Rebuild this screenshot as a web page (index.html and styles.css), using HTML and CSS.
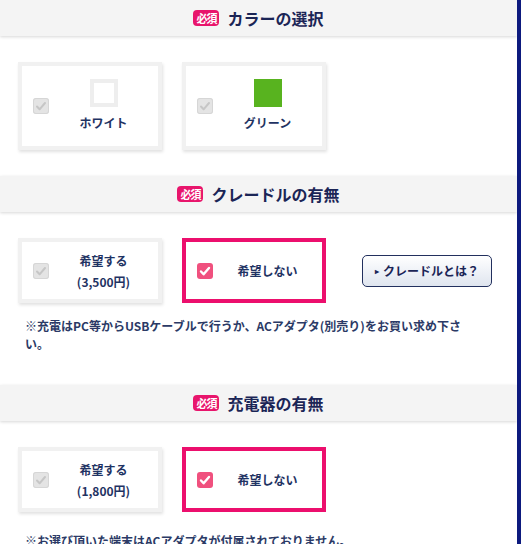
FILE: index.html
```html
<!DOCTYPE html>
<html lang="ja">
<head>
    <meta charset="UTF-8">
    <meta name="viewport" content="width=device-width, initial-scale=1.0">
    <title>オプションの選択</title>
    <link rel="stylesheet" href="styles.css">
</head>
<body>
<div class="page">

    <!-- カラー -->
    <div class="section-head"><span class="badge">必須</span>カラーの選択</div>
    <div class="section-body">
        <div class="choice-row">
            <label class="choice tall">
                <span class="check off"><svg viewBox="0 0 16 16"><path d="M4 8.5l2.6 2.8L12 5" /></svg></span>
                <span class="choice-label">
                    <span class="swatch white"></span>
                    ホワイト
                </span>
            </label>
            <label class="choice tall">
                <span class="check off"><svg viewBox="0 0 16 16"><path d="M4 8.5l2.6 2.8L12 5" /></svg></span>
                <span class="choice-label">
                    <span class="swatch green"></span>
                    グリーン
                </span>
            </label>
        </div>
    </div>

    <!-- クレードル -->
    <div class="section-head"><span class="badge">必須</span>クレードルの有無</div>
    <div class="section-body">
        <div class="choice-row">
            <label class="choice">
                <span class="check off"><svg viewBox="0 0 16 16"><path d="M4 8.5l2.6 2.8L12 5" /></svg></span>
                <span class="choice-label">希望する<br>(3,500円)</span>
            </label>
            <label class="choice selected">
                <span class="check on"><svg viewBox="0 0 16 16"><path d="M4 8.5l2.6 2.8L12 5" /></svg></span>
                <span class="choice-label">希望しない</span>
            </label>
            <a class="info-btn" href="#"><span class="arrow">&#9656;</span>クレードルとは？</a>
        </div>
        <p class="note">※充電はPC等からUSBケーブルで行うか、ACアダプタ(別売り)をお買い求め下さい。</p>
    </div>

    <!-- 充電器 -->
    <div class="section-head"><span class="badge">必須</span>充電器の有無</div>
    <div class="section-body">
        <div class="choice-row">
            <label class="choice">
                <span class="check off"><svg viewBox="0 0 16 16"><path d="M4 8.5l2.6 2.8L12 5" /></svg></span>
                <span class="choice-label">希望する<br>(1,800円)</span>
            </label>
            <label class="choice selected">
                <span class="check on"><svg viewBox="0 0 16 16"><path d="M4 8.5l2.6 2.8L12 5" /></svg></span>
                <span class="choice-label">希望しない</span>
            </label>
        </div>
        <p class="note wide">※お選び頂いた端末はACアダプタが付属されておりません。</p>
    </div>

</div>
</body>
</html>
```

FILE: styles.css
```css
html, body {
    margin: 0;
    padding: 0;
}
body {
    font-family: "Noto Sans CJK JP", "Liberation Sans", sans-serif;
    background: #fff;
    color: #1f3363;
}
.page {
    width: 517px;
    min-height: 544px;
    border-right: 4px solid #0d1a7e;
    background: #fff;
    overflow: hidden;
}
.section-head {
    height: 36px;
    display: flex;
    align-items: center;
    justify-content: center;
    background: #f4f4f4;
    box-shadow: 0 1px 3px rgba(0, 0, 0, 0.16);
    font-size: 16px;
    font-weight: bold;
    color: #1b2556;
    position: relative;
}
.badge {
    display: inline-block;
    width: 26px;
    height: 16px;
    line-height: 16px;
    margin-right: 8px;
    border-radius: 4px;
    background: #e8156c;
    color: #fff;
    font-size: 11px;
    text-align: center;
    letter-spacing: -1px;
}
.section-body {
    padding: 26px 0 26px 18px;
}
.choice-row {
    display: flex;
    align-items: center;
    gap: 20px;
}
.choice {
    box-sizing: border-box;
    width: 144px;
    height: 65px;
    display: flex;
    align-items: center;
    padding-left: 11px;
    background: #fff;
    border: 4px solid #f1f1f1;
    box-shadow: 1px 2px 3px rgba(0, 0, 0, 0.12);
    cursor: pointer;
}
.choice.tall {
    height: 88px;
}
.choice.selected {
    border-color: #ec0f6d;
    box-shadow: none;
}
.check {
    width: 16px;
    height: 16px;
    border-radius: 3px;
    flex-shrink: 0;
    display: flex;
}
.check svg {
    width: 16px;
    height: 16px;
    fill: none;
    stroke-width: 2;
    stroke-linecap: round;
    stroke-linejoin: round;
}
.check.off {
    background: #e4e4e4;
    box-shadow: inset 0 0 0 1px #d6d6d6;
}
.check.off svg {
    stroke: #c6c6c6;
}
.check.on {
    background: #f0507e;
}
.check.on svg {
    stroke: #fff;
    stroke-width: 2.4;
}
.choice-label {
    flex: 1;
    display: flex;
    flex-direction: column;
    align-items: center;
    font-size: 12px;
    font-weight: bold;
    line-height: 21px;
    text-align: center;
    color: #1f3363;
}
.swatch {
    box-sizing: border-box;
    width: 28px;
    height: 28px;
    margin: 0 0 5px;
}
.swatch.white {
    border: 4px solid #eeeeee;
    background: #fff;
}
.swatch.green {
    background: #58b31f;
}
.info-btn {
    box-sizing: border-box;
    width: 130px;
    height: 32px;
    margin-left: 16px;
    display: flex;
    align-items: center;
    justify-content: center;
    border: 1px solid #22305e;
    border-radius: 5px;
    background: linear-gradient(#ffffff, #dfe5ef);
    color: #1b2556;
    font-size: 12px;
    font-weight: bold;
    text-decoration: none;
}
.info-btn .arrow {
    font-size: 8px;
    margin-right: 4px;
}
.note {
    margin: 14px 0 6px 7px;
    padding-right: 40px;
    font-size: 12px;
    font-weight: bold;
    line-height: 18px;
    color: #2b3a66;
}
.note.wide {
    margin-top: 20px;
}
```
